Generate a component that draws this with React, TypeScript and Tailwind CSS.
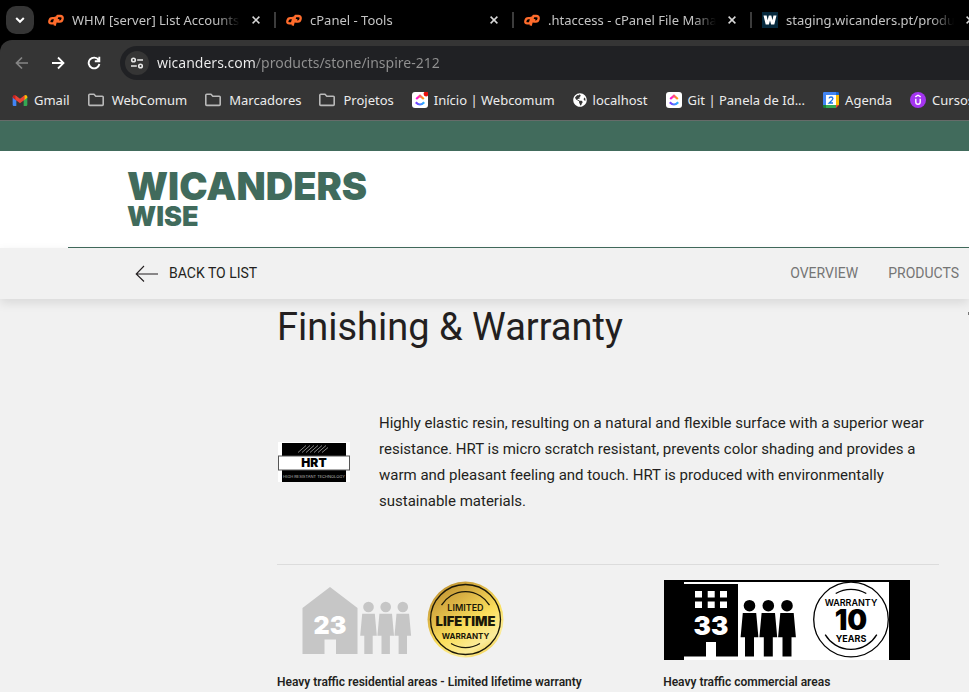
import type { ReactNode } from "react";
import { FaGlobeAmericas } from "react-icons/fa";

function CpanelIcon() {
  return (
    <svg viewBox="0 0 16 12" className="h-3 w-4 shrink-0" fill="none" stroke="#ff6c2c" strokeWidth="2.300" strokeLinejoin="round">
      <path d="M7.200 4.200H4.400Q2 4.200 1.400 6.800T3.400 9.400H5.800L8 2.600" />
      <path d="M6.600 11.600 9.400 2H12.200Q15.200 2 14.600 5T11.200 7.600H9.600L10.400 5" />
    </svg>
  );
}

function WicandersIcon() {
  return (
    <svg viewBox="0 0 16 16" className="size-4 shrink-0">
      <rect width="16" height="16" fill="#06293d" />
      <path d="M1.500 3.500h3.200l.9 4.800 1.200-4.800h2.500l1.200 4.800.9-4.800h3.100l-2.200 9H9.100L8 8.600l-1.100 3.900H3.700z" fill="#fff" />
    </svg>
  );
}

function GmailIcon() {
  return (
    <svg viewBox="0 0 16 12" className="h-[11px] w-4 shrink-0">
      <path d="M0 2v8.500Q0 12 1.300 12H4V5z" fill="#4285f4" />
      <path d="M16 2v8.500Q16 12 14.700 12H12V5z" fill="#34a853" />
      <path d="M12 1.200V6l4-3V1.800Q15.800 0 14 0z" fill="#fbbc04" />
      <path d="M4 1.200V6L0 3V1.800Q.2 0 2 0z" fill="#c5221f" />
      <path d="M3 .4 8 4.200 13 .4V5.200L8 9 3 5.200z" fill="#ea4335" />
    </svg>
  );
}

function FolderIcon() {
  return (
    <svg viewBox="0 0 16 14" className="h-3.5 w-4 shrink-0" fill="none" stroke="#b9b9b9" strokeWidth="1.600" strokeLinejoin="round">
      <path d="M.8 2.200Q.8 1.300 1.700 1.300H6l1.800 1.900h6.500q.9 0 .9.9v7.400q0 .9-.9.9H1.700q-.9 0-.9-.9z" />
    </svg>
  );
}

function ClickUpIcon({ alert = false, id }: { alert?: boolean; id: string }) {
  return (
    <svg viewBox="0 0 16 16" className="size-4 shrink-0">
      <defs>
        <linearGradient id={`${id}-top`} x1="0" x2="1">
          <stop offset="0" stopColor="#ff02f0" />
          <stop offset="1" stopColor="#ffa800" />
        </linearGradient>
        <linearGradient id={`${id}-bottom`} x1="0" x2="1">
          <stop offset="0" stopColor="#7b36ff" />
          <stop offset="1" stopColor="#26b8ff" />
        </linearGradient>
      </defs>
      <rect width="16" height="16" rx="3" fill="#fff" />
      <path d="M4.200 7 8 3.800 11.800 7" fill="none" stroke={`url(#${id}-top)`} strokeWidth="2.200" />
      <path d="M3.800 10.200q4.200 4.600 8.400 0" fill="none" stroke={`url(#${id}-bottom)`} strokeWidth="2.200" />
      {alert && <circle cx="14" cy="2" r="2.400" fill="#e8100c" />}
    </svg>
  );
}

function CalendarIcon() {
  return (
    <svg viewBox="0 0 16 16" className="size-4 shrink-0">
      <path d="M0 1.200Q0 0 1.200 0H13v3H3v10H0z" fill="#4285f4" />
      <path d="M13 0h1.800Q16 0 16 1.200V3h-3z" fill="#1967d2" />
      <path d="M13 3h3v10h-3z" fill="#fbbc04" />
      <path d="M3 13h10v3H3z" fill="#34a853" />
      <path d="M0 13h3v3H1.200Q0 16 0 14.800z" fill="#188038" />
      <path d="M13 13h3l-3 3z" fill="#ea4335" />
      <path d="M3 3h10v10H3z" fill="#fff" />
      <path d="M6 6.400Q6.400 5 8 5q1.900 0 1.900 1.500Q9.900 7.600 6.200 11H10" fill="none" stroke="#1a73e8" strokeWidth="1.300" />
    </svg>
  );
}

function UdemyIcon() {
  return (
    <svg viewBox="0 0 16 16" className="size-4 shrink-0">
      <circle cx="8" cy="8" r="8" fill="#a435f0" />
      <path d="M5.300 4.800 8 3.200 10.700 4.800M5.800 6.800v3.200q0 2.300 2.200 2.300t2.200-2.300V6.800" fill="none" stroke="#fff" strokeWidth="1.400" />
    </svg>
  );
}

const tabs: { title: string; icon: ReactNode }[] = [
  { title: "WHM [server] List Accounts - 212", icon: <CpanelIcon /> },
  { title: "cPanel - Tools", icon: <CpanelIcon /> },
  { title: ".htaccess - cPanel File Manager", icon: <CpanelIcon /> },
  { title: "staging.wicanders.pt/products", icon: <WicandersIcon /> },
];

const bookmarks: { label: string; icon: ReactNode; folder?: boolean }[] = [
  { label: "Gmail", icon: <GmailIcon /> },
  { label: "WebComum", icon: <FolderIcon />, folder: true },
  { label: "Marcadores", icon: <FolderIcon />, folder: true },
  { label: "Projetos", icon: <FolderIcon />, folder: true },
  { label: "Início | Webcomum", icon: <ClickUpIcon id="inicio" alert /> },
  { label: "localhost", icon: <FaGlobeAmericas className="size-3.5 shrink-0 text-white" /> },
  { label: "Git | Panela de Id...", icon: <ClickUpIcon id="git" /> },
  { label: "Agenda", icon: <CalendarIcon /> },
  { label: "Cursos", icon: <UdemyIcon /> },
];

function TabStrip() {
  return (
    <div className="flex h-10 items-center overflow-hidden bg-black pl-1.5">
      <button aria-label="Search tabs" className="flex size-7 shrink-0 items-center justify-center rounded-[10px] bg-[#353535]">
        <svg viewBox="0 0 10 10" className="size-2.5" fill="none" stroke="#fff" strokeWidth="2">
          <path d="m1.200 3 3.800 3.800L8.800 3" />
        </svg>
      </button>
      <div className="flex pl-0.5">
        {tabs.map((tab, i) => (
          <div key={tab.title} className={`flex h-4 w-[238px] shrink-0 items-center border-l-2 pl-2.5 ${i === 0 ? "border-transparent" : "border-[#3c3c3c]"}`}>
            <button className="flex items-center gap-2 text-[13px] leading-5 text-[#c4c4c4]">
              {tab.icon}
              <span className="w-[168px] overflow-hidden text-left whitespace-nowrap [mask-image:linear-gradient(to_right,black_86%,transparent)]">{tab.title}</span>
            </button>
            <button aria-label="Close tab" className="ml-2 flex size-4 items-center justify-center">
              <svg viewBox="0 0 8 8" className="size-2" stroke="#d8d8d8" strokeWidth="1.500">
                <path d="m.6.6 6.800 6.800M7.400.6.6 7.400" />
              </svg>
            </button>
          </div>
        ))}
      </div>
    </div>
  );
}

function Toolbar() {
  return (
    <div className="bg-black">
      <div className="overflow-hidden rounded-tl-xl border-b border-[#666b69] bg-[#353535]">
        <div className="flex items-center pt-1.5 pl-[15px]">
          <div className="flex w-[105px] shrink-0 items-center gap-[22px]">
            <button aria-label="Back">
              <svg viewBox="0 0 14 14" className="size-3.5" fill="none" stroke="#858585" strokeWidth="1.700">
                <path d="M13 7H2M7 1.500 1.500 7 7 12.500" />
              </svg>
            </button>
            <button aria-label="Forward">
              <svg viewBox="0 0 14 14" className="size-3.5" fill="none" stroke="#fff" strokeWidth="1.800">
                <path d="M1 7h11M7 1.500 12.500 7 7 12.500" />
              </svg>
            </button>
            <button aria-label="Reload">
              <svg viewBox="0 0 14 14" className="size-3.5" fill="none" stroke="#fff" strokeWidth="1.900">
                <path d="M11.600 4A5.400 5.400 0 1 0 12.400 8M12.300.8V5.300H7.800" />
              </svg>
            </button>
          </div>
          <div className="flex h-[34px] flex-1 items-center gap-2 rounded-l-full bg-[#202124] pl-[5px]">
            <button aria-label="View site information" className="flex size-6 shrink-0 items-center justify-center rounded-full bg-[#353535]">
              <svg viewBox="0 0 14 12" className="h-3 w-3.5" fill="none" stroke="#e8e8e8" strokeWidth="1.600">
                <circle cx="3.500" cy="3" r="1.800" />
                <path d="M7.200 3H13M1 9h5.800" />
                <circle cx="10.500" cy="9" r="1.800" />
              </svg>
            </button>
            <input
              aria-label="Address"
              defaultValue="wicanders.com/products/stone/inspire-212"
              className="min-w-0 flex-1 bg-[linear-gradient(to_right,#f0f0f0_98px,#929292_98px)] bg-clip-text text-sm text-transparent outline-none"
            />
          </div>
        </div>
        <nav aria-label="Bookmarks" className="flex h-10 items-center gap-[18px] pl-3 text-[13px] leading-5 whitespace-nowrap text-[#ececec]">
          {bookmarks.map((b) => (
            <a key={b.label} href="#" className={`flex shrink-0 items-center ${b.folder ? "gap-2" : "gap-1.5"}`}>
              {b.icon}
              {b.label}
            </a>
          ))}
        </nav>
      </div>
    </div>
  );
}

function SiteHeader() {
  return (
    <header>
      <div className="h-[30px] bg-[#416b5c]" />
      <div className="bg-white">
        <div className="ml-[68px] border-b border-[#416b5c] pt-[17px] pb-[17px] pl-[59px]">
          <a href="#" className="flex flex-col font-['Inter',sans-serif] font-black text-[#416b5c]">
            <span className="text-[38px] leading-9">WICANDERS</span>
            <span className="text-[27px] leading-[26px]">WISE</span>
          </a>
        </div>
      </div>
      <nav className="relative flex h-[51px] items-center bg-[#f1f1f1] pr-2.5 pb-0.5 pl-[135px] text-sm shadow-[0_4px_10px_rgba(0,0,0,0.1)]">
        <a href="#" className="flex items-center gap-2.5 text-[#231f20]">
          <svg viewBox="0 0 24 18" className="h-[18px] w-6" fill="none" stroke="#231f20" strokeWidth="1.100">
            <path d="M23 10H1.500M9 2 1.200 10 9 17.500" />
          </svg>
          BACK TO LIST
        </a>
        <div className="ml-auto flex gap-[30px] text-[#757575]">
          <a href="#">OVERVIEW</a>
          <a href="#">PRODUCTS</a>
        </div>
      </nav>
    </header>
  );
}

function HrtBadge() {
  return (
    <svg viewBox="0 0 72 40" role="img" aria-label="HRT" className="h-10 w-[72px] shrink-0 font-['Inter',sans-serif]">
      <rect width="72" height="40" fill="#fff" />
      <rect x="4" y="1" width="64" height="39" fill="#000" />
      <path d="m20 10.500 8-7M24 10.500l8-7M28 10.500l8-7M32 10.500l8-7M36 10.500l8-7M40 10.500l8-7M44 10.500l6-5" stroke="#aaa" strokeWidth=".8" />
      <rect x=".5" y="14" width="71" height="14" fill="#fff" stroke="#555" />
      <text x="36" y="25" fontSize="12" fontWeight="900" textAnchor="middle">HRT</text>
      <text x="36" y="36" fontSize="4" textAnchor="middle" fill="#bbb">HIGH RESISTANT TECHNOLOGY</text>
    </svg>
  );
}

function ResidentialBadge() {
  return (
    <svg viewBox="0 0 246 80" role="img" aria-label="Class 23, limited lifetime warranty" className="h-20 w-[246px] font-['Inter',sans-serif]">
      <defs>
        <linearGradient id="gold" x1=".1" y1="0" x2=".75" y2="1">
          <stop offset="0" stopColor="#b98c2c" />
          <stop offset=".3" stopColor="#d9b144" />
          <stop offset=".6" stopColor="#fbdf5c" />
          <stop offset=".85" stopColor="#fbec9b" />
          <stop offset="1" stopColor="#f3cf4a" />
        </linearGradient>
      </defs>
      <path d="M52 7 79.500 28v46H58V59.500H46.500V74H24.500V28z" fill="#c6c6c6" />
      <text x="52" y="54" fontSize="25" fontWeight="900" textAnchor="middle" fill="#fff">23</text>
      {[90.500, 107.700, 124.800].map((x) => (
        <g key={x} transform={`translate(${x} 0)`} fill="#c6c6c6">
          <circle cy="27" r="5.300" />
          <path d="M-6.300 33.700H6.300L8.300 55.700H4.200V74H-4.200V55.700H-8.300z" />
        </g>
      ))}
      <circle cx="187.500" cy="39.500" r="38" fill="url(#gold)" />
      <g fill="none" stroke="#1b1808" strokeWidth="1.300">
        <circle cx="187.500" cy="39.500" r="35" />
        <path d="M163.500 25.200A28 28 0 0 1 211.500 25.200M173 63.500A28 28 0 0 0 202 63.500" />
      </g>
      <g fill="#1b1808" textAnchor="middle">
        <text x="187.500" y="30.500" fontSize="9" fontWeight="600">LIMITED</text>
        <text x="187.500" y="45.500" fontSize="13" fontWeight="900">LIFETIME</text>
        <text x="187.500" y="59" fontSize="8" fontWeight="700">WARRANTY</text>
      </g>
    </svg>
  );
}

function CommercialBadge() {
  return (
    <svg viewBox="0 0 246 80" role="img" aria-label="Class 33, 10 years warranty" className="h-20 w-[246px] font-['Inter',sans-serif]">
      <rect width="246" height="80" fill="#000" />
      <path d="M20 2H225V80H20V76.500H74V4H20z" fill="#fff" />
      <path d="M31 11h7v6.500h-7zM43.700 11h7v6.500h-7zM56 11h7v6.500h-7zM31 21.500h7V28h-7zM43.700 21.500h7V28h-7zM56 21.500h7V28h-7zM42 62h10v15H42z" fill="#fff" />
      <text x="47" y="54.500" fontSize="26" fontWeight="900" textAnchor="middle" fill="#fff">33</text>
      {[85.500, 104.300, 123].map((x) => (
        <g key={x} transform={`translate(${x} 0)`}>
          <circle cy="25.700" r="5.800" />
          <path d="M-6.700 33H6.700L8.900 57.300H4.500V76.500H-4.500V57.300H-8.900z" />
        </g>
      ))}
      <g fill="none" stroke="#000" strokeWidth="1.300">
        <circle cx="187" cy="39.500" r="37.300" />
        <path d="M171.700 13.500A30 30 0 0 1 202.300 13.500M161.200 54.700A30 30 0 0 0 212.800 54.700" />
      </g>
      <g textAnchor="middle">
        <text x="187" y="25.500" fontSize="9" fontWeight="600">WARRANTY</text>
        <text x="187" y="49.500" fontSize="28" fontWeight="900">10</text>
        <text x="187" y="61.500" fontSize="9" fontWeight="700">YEARS</text>
      </g>
    </svg>
  );
}

function FinishingSection() {
  return (
    <main className="pl-[277px] text-[#231f20]">
      <div className="flex justify-between">
        <h1 className="pt-1.5 text-[38px] leading-[44px]">Finishing &amp; Warranty</h1>
        <div className="mt-[13px] h-[3px] w-px bg-[#777]" />
      </div>
      <div className="pr-[30px]">
        <div className="mt-[61px] flex items-center gap-[29px] border-b border-[#dcdcdc] pb-[50px] pl-px">
          <HrtBadge />
          <p className="flex-1 text-[15px] leading-[26px]">
            Highly elastic resin, resulting on a natural and flexible surface with a superior wear resistance. HRT is micro scratch resistant, prevents color shading and provides a warm and pleasant feeling and touch. HRT is produced with environmentally sustainable materials.
          </p>
        </div>
        <div className="grid grid-cols-12 pt-[15px] text-xs font-semibold whitespace-nowrap">
          <figure className="col-span-7">
            <div className="pl-px">
              <ResidentialBadge />
            </div>
            <figcaption className="pt-3 leading-5">Heavy traffic residential areas - Limited lifetime warranty</figcaption>
          </figure>
          <figure className="col-span-5">
            <div className="pl-px">
              <CommercialBadge />
            </div>
            <figcaption className="pt-3 leading-5">Heavy traffic commercial areas</figcaption>
          </figure>
        </div>
      </div>
    </main>
  );
}

export default function App() {
  return (
    <div className="min-h-screen overflow-hidden bg-[#f1f1f1]">
      <div className="font-['Noto_Sans',sans-serif]">
        <TabStrip />
        <Toolbar />
      </div>
      <div className="font-['Roboto',sans-serif]">
        <SiteHeader />
        <FinishingSection />
      </div>
    </div>
  );
}
